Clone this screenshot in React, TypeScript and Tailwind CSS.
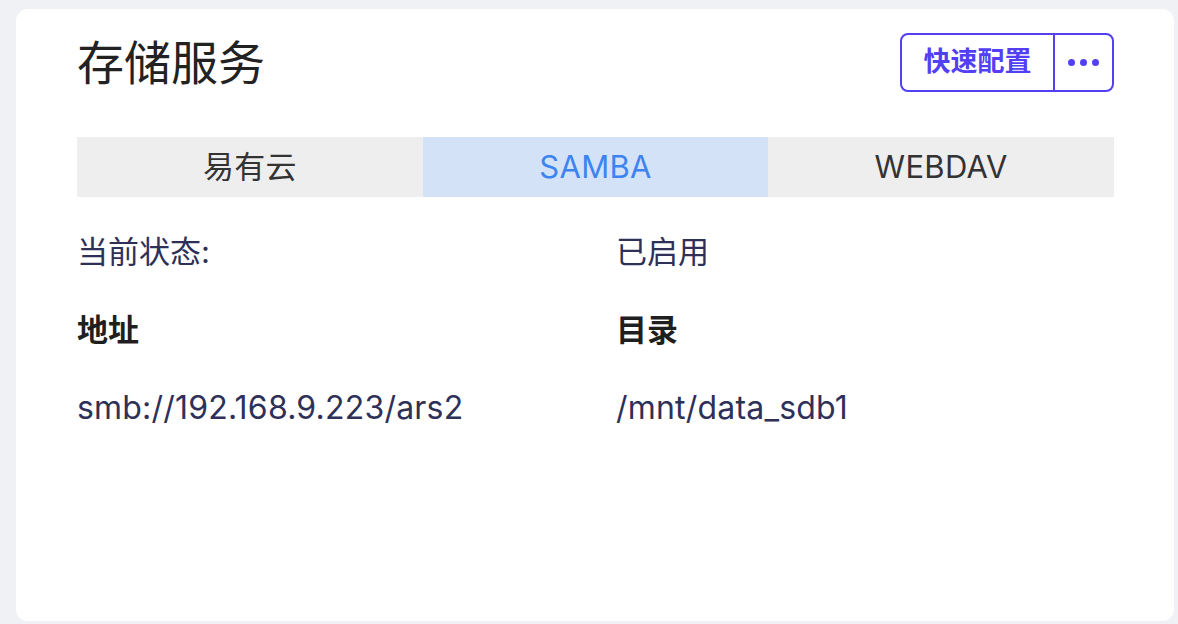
import { useState } from 'react';

const font = { fontFamily: 'Inter, "Noto Sans CJK SC", sans-serif' };

const tabs = ['易有云', 'SAMBA', 'WEBDAV'];

export default function App() {
  const [active, setActive] = useState(1);

  return (
    <div className="min-h-screen bg-[#f0f1f4] pt-[9px] pl-[16px] pr-[4px] pb-[3px]" style={font}>
      <div className="h-[612px] rounded-[12px] bg-white pl-[61px] pr-[60px] pt-[24px]">
        <div className="flex h-[59px] items-center justify-between">
          <h1 className="text-[47px] leading-none text-[#222222]">存储服务</h1>
          <div className="flex h-[59px] rounded-[8px] border-2 border-[#5340f5] text-[#5340f5]">
            <button className="w-[153px] border-r-2 border-[#5340f5] text-[27px] font-semibold">快速配置</button>
            <button className="flex w-[57px] items-center justify-center gap-[5px]">
              <span className="h-[7px] w-[7px] rounded-full bg-[#5340f5]" />
              <span className="h-[7px] w-[7px] rounded-full bg-[#5340f5]" />
              <span className="h-[7px] w-[7px] rounded-full bg-[#5340f5]" />
            </button>
          </div>
        </div>

        <div className="mt-[45px] grid h-[60px] grid-cols-3">
          {tabs.map((t, i) => (
            <button
              key={t}
              onClick={() => setActive(i)}
              className={
                i === active
                  ? 'bg-[#d4e2f7] text-[31px] tracking-[0.3px] text-[#3d84f0]'
                  : 'bg-[#eeeeee] text-[31px] tracking-[0.3px] text-[#333333]'
              }
            >
              {t}
            </button>
          ))}
        </div>

        <div className="mt-[16px] grid grid-cols-[539px_1fr] text-[31px]">
          <div className="flex h-[78px] items-center text-[#2e3058]">当前状态:</div>
          <div className="flex h-[78px] items-center text-[#2e3058]">已启用</div>
          <div className="flex h-[78px] items-center font-bold text-[#1f1f1f]">地址</div>
          <div className="flex h-[78px] items-center font-bold text-[#1f1f1f]">目录</div>
          <div className="flex h-[78px] items-center text-[32px] tracking-[0.2px] text-[#2e3058]">smb://192.168.9.223/ars2</div>
          <div className="flex h-[78px] items-center text-[32px] tracking-[0.2px] text-[#2e3058]">/mnt/data_sdb1</div>
        </div>
      </div>
    </div>
  );
}
